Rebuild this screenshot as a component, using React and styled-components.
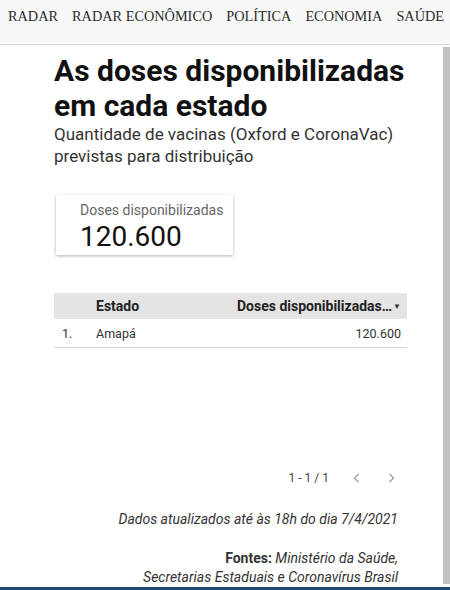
import styled, { createGlobalStyle } from "styled-components";

const GlobalStyle = createGlobalStyle`
  html, body {
    margin: 0;
    padding: 0;
    background: #fff;
    overflow: hidden;
  }
`;

const Page = styled.div`
  width: 450px;
  height: 590px;
  display: flex;
  flex-direction: column;
  overflow: hidden;
`;

const Nav = styled.nav`
  height: 45px;
  flex-shrink: 0;
  box-sizing: border-box;
  background: #f8f8f8;
  border-bottom: 1px solid #d9d9d9;
  display: flex;
  gap: 14px;
  padding: 6px 0 0 8px;
  white-space: nowrap;
  font-family: "Liberation Serif", serif;
  font-size: 14.3px;
  line-height: 20px;
  color: #2b2b2b;
`;

const Frame = styled.div`
  flex: 1;
  display: flex;
  min-height: 0;
`;

const Content = styled.main`
  flex: 1;
  padding: 8px 36px 0 54px;
  font-family: Roboto, "Noto Sans", sans-serif;
  color: #1a1a1a;
  overflow: hidden;
`;

const Scrollbar = styled.div`
  width: 7px;
  flex-shrink: 0;
  padding: 2px 0 3px;
  display: flex;
`;

const Thumb = styled.div`
  flex: 1;
  background: #c1c1c1;
`;

const BottomBar = styled.div`
  height: 3px;
  flex-shrink: 0;
  background: #1f4b74;
`;

const Title = styled.h1`
  margin: 0;
  max-width: 370px;
  font-size: 30px;
  font-weight: 700;
  line-height: 35px;
  color: #111;
`;

const Subtitle = styled.p`
  margin: 0;
  max-width: 370px;
  font-size: 17px;
  line-height: 22px;
  color: #333;
`;

const Scorecard = styled.div`
  width: 177px;
  height: 60px;
  box-sizing: border-box;
  margin: 28px 0 0 2px;
  padding: 7px 0 0 24px;
  background: #fff;
  box-shadow: 0 1px 3px rgba(0, 0, 0, 0.3);
`;

const ScoreLabel = styled.div`
  font-size: 14px;
  line-height: 17px;
  color: #666;
`;

const ScoreValue = styled.div`
  font-size: 28px;
  line-height: 36px;
  color: #111;
`;

const TableBox = styled.section`
  margin-top: 38px;
  height: 199px;
  display: flex;
  flex-direction: column;
`;

const Row = styled.div`
  display: grid;
  grid-template-columns: 34px 1fr auto;
  align-items: center;
  height: ${(p) => (p.$head ? "26px" : "28px")};
  padding: 0 6px 0 8px;
  font-size: ${(p) => (p.$head ? "14px" : "12.5px")};
  font-weight: ${(p) => (p.$head ? 700 : 400)};
  background: ${(p) => (p.$head ? "#e4e4e4" : "transparent")};
  border-bottom: ${(p) => (p.$head ? "none" : "1px solid #d6d6d6")};
  color: ${(p) => (p.$head ? "#222" : "#333")};
`;

const SortHead = styled.span`
  display: flex;
  align-items: center;
  gap: 1px;
`;

const Arrow = styled.span`
  font-size: 8px;
  color: #333;
`;

const Pager = styled.div`
  margin-top: auto;
  margin-bottom: 7px;
  display: flex;
  justify-content: flex-end;
  align-items: center;
  gap: 22px;
  padding-right: 10px;
  font-size: 12px;
  color: #444;
`;

const PageBtn = styled.span`
  display: flex;
  color: #9a9a9a;
`;

const Note = styled.p`
  margin: ${(p) => p.$top || "0"} 9px 0 0;
  text-align: right;
  font-size: 14px;
  line-height: 19px;
  font-style: italic;
  color: #333;
`;

const Strong = styled.b`
  font-style: normal;
  font-weight: 700;
`;

const Chevron = ({ dir }) => (
  <svg width="12" height="12" viewBox="0 0 12 12" fill="none" stroke="currentColor" strokeWidth="1.2">
    {dir === "left" ? <path d="M7.5 2 3.5 6l4 4" /> : <path d="M4.5 2l4 4-4 4" />}
  </svg>
);

const navItems = ["RADAR", "RADAR ECONÔMICO", "POLÍTICA", "ECONOMIA", "SAÚDE"];

export default function App() {
  return (
    <Page>
      <GlobalStyle />
      <Nav>
        {navItems.map((item) => (
          <span key={item}>{item}</span>
        ))}
      </Nav>
      <Frame>
        <Content>
          <Title>As doses disponibilizadas em cada estado</Title>
          <Subtitle>Quantidade de vacinas (Oxford e CoronaVac) previstas para distribuição</Subtitle>
          <Scorecard>
            <ScoreLabel>Doses disponibilizadas</ScoreLabel>
            <ScoreValue>120.600</ScoreValue>
          </Scorecard>
          <TableBox>
            <Row $head>
              <span />
              <span>Estado</span>
              <SortHead>
                Doses disponibilizadas…<Arrow>▼</Arrow>
              </SortHead>
            </Row>
            <Row>
              <span>1.</span>
              <span>Amapá</span>
              <span>120.600</span>
            </Row>
            <Pager>
              <span>1 - 1 / 1</span>
              <PageBtn>
                <Chevron dir="left" />
              </PageBtn>
              <PageBtn>
                <Chevron dir="right" />
              </PageBtn>
            </Pager>
          </TableBox>
          <Note $top="18px">Dados atualizados até às 18h do dia 7/4/2021</Note>
          <Note $top="20px">
            <Strong>Fontes:</Strong> Ministério da Saúde,
            <br />
            Secretarias Estaduais e Coronavírus Brasil
          </Note>
        </Content>
        <Scrollbar>
          <Thumb />
        </Scrollbar>
      </Frame>
      <BottomBar />
    </Page>
  );
}
